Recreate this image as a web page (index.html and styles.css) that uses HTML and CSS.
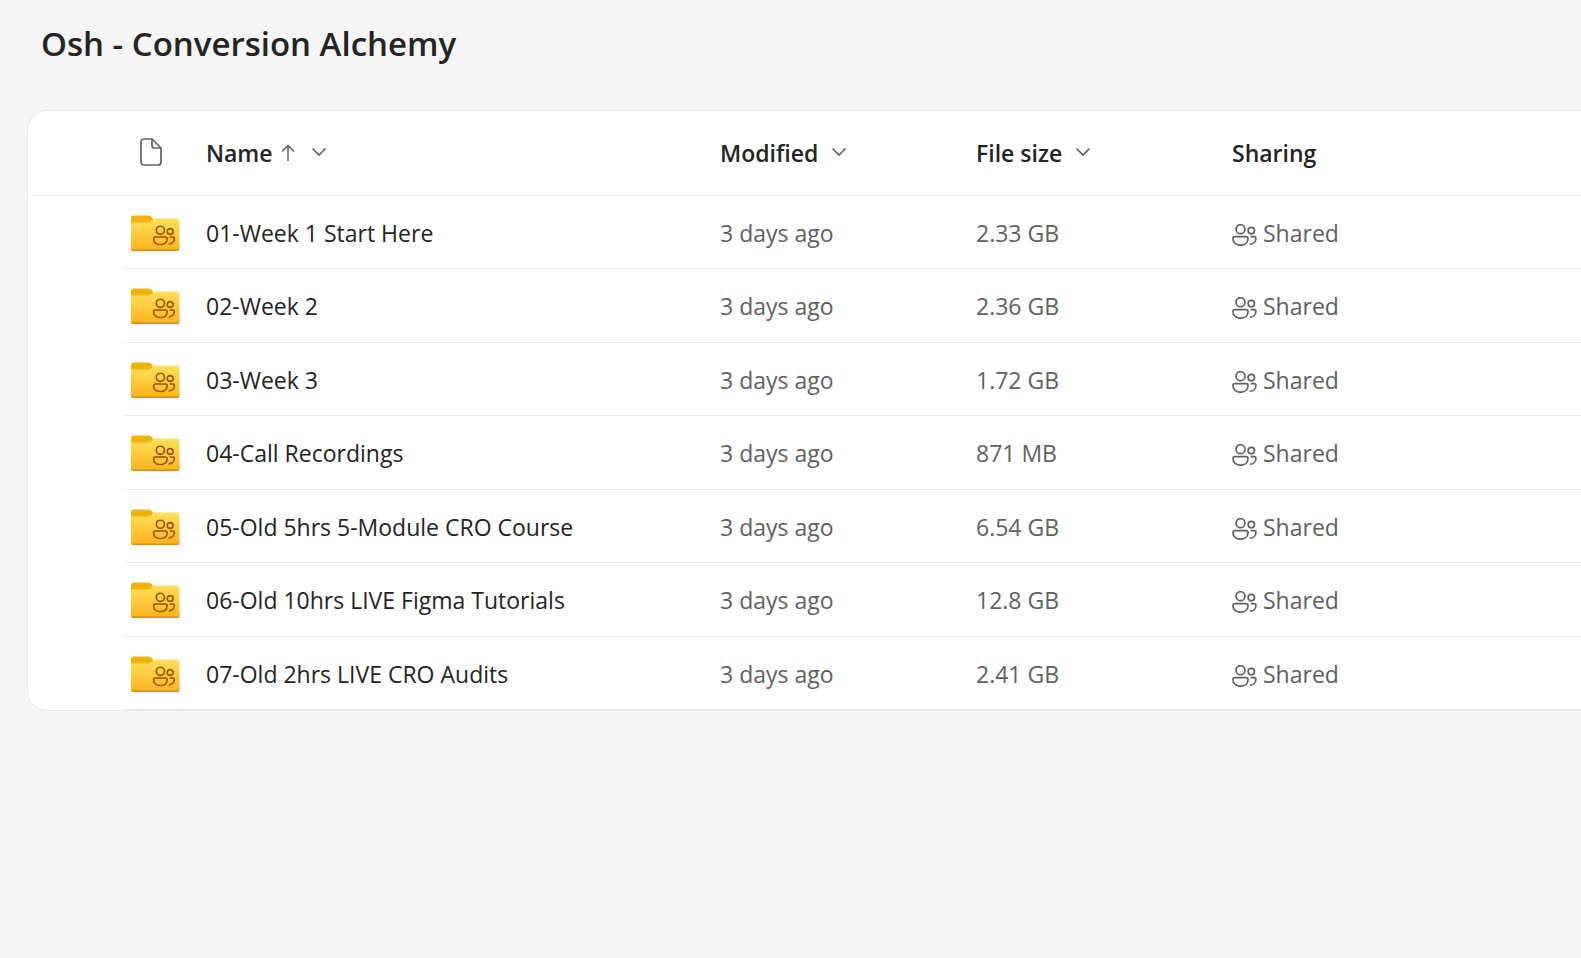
FILE: index.html
```html
<!DOCTYPE html>
<html lang="en">
<head>
    <meta charset="UTF-8">
    <meta name="viewport" content="width=device-width, initial-scale=1.0">
    <title>Osh - Conversion Alchemy</title>
    <link rel="stylesheet" href="styles.css">
</head>
<body>

    <!-- Shared icons -->
    <svg class="sprite" aria-hidden="true">
        <defs>
            <linearGradient id="folderFill" x1="0" y1="0" x2="0" y2="1">
                <stop offset="0" stop-color="#ffe05c"/>
                <stop offset="1" stop-color="#ffb41c"/>
            </linearGradient>
        </defs>
        <symbol id="people" viewBox="0 0 25 22">
            <circle cx="8.5" cy="5.2" r="4.5"/>
            <circle cx="19.3" cy="6.6" r="3.2"/>
            <path d="M3 12.7h11c1.2 0 2 .8 2 2 0 4-3.3 6.5-7.5 6.5S1 18.7 1 14.7c0-1.2.8-2 2-2z"/>
            <path d="M18.7 12.7h3.5c1 0 1.700.7 1.700 1.700 0 3.600-2.700 5.800-6.200 5.800"/>
        </symbol>
        <symbol id="folder" viewBox="0 0 50 36">
            <path d="M1 3a2.500 2.500 0 0 1 2.500-2.500h14.500c1.200 0 2 .3 2.800 1L23.500 4v5H1z" fill="#efb30c"/>
            <path d="M1 31v3a2 2 0 0 0 2 2h44.500a2 2 0 0 0 2-2v-3z" fill="#d98a16"/>
            <path d="M1 7.500h17c1.200 0 2-.3 2.900-1.100l2-1.800c.8-.8 1.700-1.100 2.900-1.100H47a2.500 2.500 0 0 1 2.500 2.500v26.500a2 2 0 0 1-2 2H3a2 2 0 0 1-2-2z" fill="url(#folderFill)"/>
            <use href="#people" x="22.500" y="10.500" width="23" height="20" fill="none" stroke="#9a5407" stroke-width="1.800"/>
        </symbol>
        <symbol id="chevron" viewBox="0 0 16 10">
            <path d="M1.500 1.500L8 8l6.500-6.500"/>
        </symbol>
    </svg>

    <h1 class="title">Osh - Conversion Alchemy</h1>

    <main class="card">
        <table class="files">
            <colgroup>
                <col class="col-select">
                <col class="col-type">
                <col class="col-name">
                <col class="col-meta">
                <col class="col-meta">
                <col>
            </colgroup>
            <thead>
                <tr>
                    <th></th>
                    <th>
                        <svg class="file-icon" viewBox="0 0 22 28" role="img" aria-label="File type">
                            <path d="M4 1h8l9 9v14a3 3 0 0 1-3 3H4a3 3 0 0 1-3-3V4a3 3 0 0 1 3-3z"/>
                            <path d="M12 1v6.500a2.500 2.500 0 0 0 2.500 2.500H21"/>
                        </svg>
                    </th>
                    <th aria-sort="ascending">
                        <button class="sort">Name
                            <svg class="arrow" viewBox="0 0 14 18"><path d="M7 17V1.500M1 7.500l6-6 6 6"/></svg>
                            <svg class="chevron"><use href="#chevron"/></svg>
                        </button>
                    </th>
                    <th><button class="sort">Modified <svg class="chevron"><use href="#chevron"/></svg></button></th>
                    <th><button class="sort">File size <svg class="chevron"><use href="#chevron"/></svg></button></th>
                    <th>Sharing</th>
                </tr>
            </thead>
            <tbody>
                <tr>
                    <td></td>
                    <td><svg class="folder"><use href="#folder"/></svg></td>
                    <td><a class="name" href="#">01-Week 1 Start Here</a></td>
                    <td>3 days ago</td>
                    <td>2.33 GB</td>
                    <td><span class="shared"><svg class="people"><use href="#people"/></svg>Shared</span></td>
                </tr>
                <tr>
                    <td></td>
                    <td><svg class="folder"><use href="#folder"/></svg></td>
                    <td><a class="name" href="#">02-Week 2</a></td>
                    <td>3 days ago</td>
                    <td>2.36 GB</td>
                    <td><span class="shared"><svg class="people"><use href="#people"/></svg>Shared</span></td>
                </tr>
                <tr>
                    <td></td>
                    <td><svg class="folder"><use href="#folder"/></svg></td>
                    <td><a class="name" href="#">03-Week 3</a></td>
                    <td>3 days ago</td>
                    <td>1.72 GB</td>
                    <td><span class="shared"><svg class="people"><use href="#people"/></svg>Shared</span></td>
                </tr>
                <tr>
                    <td></td>
                    <td><svg class="folder"><use href="#folder"/></svg></td>
                    <td><a class="name" href="#">04-Call Recordings</a></td>
                    <td>3 days ago</td>
                    <td>871 MB</td>
                    <td><span class="shared"><svg class="people"><use href="#people"/></svg>Shared</span></td>
                </tr>
                <tr>
                    <td></td>
                    <td><svg class="folder"><use href="#folder"/></svg></td>
                    <td><a class="name" href="#">05-Old 5hrs 5-Module CRO Course</a></td>
                    <td>3 days ago</td>
                    <td>6.54 GB</td>
                    <td><span class="shared"><svg class="people"><use href="#people"/></svg>Shared</span></td>
                </tr>
                <tr>
                    <td></td>
                    <td><svg class="folder"><use href="#folder"/></svg></td>
                    <td><a class="name" href="#">06-Old 10hrs LIVE Figma Tutorials</a></td>
                    <td>3 days ago</td>
                    <td>12.8 GB</td>
                    <td><span class="shared"><svg class="people"><use href="#people"/></svg>Shared</span></td>
                </tr>
                <tr>
                    <td></td>
                    <td><svg class="folder"><use href="#folder"/></svg></td>
                    <td><a class="name" href="#">07-Old 2hrs LIVE CRO Audits</a></td>
                    <td>3 days ago</td>
                    <td>2.41 GB</td>
                    <td><span class="shared"><svg class="people"><use href="#people"/></svg>Shared</span></td>
                </tr>
            </tbody>
        </table>
    </main>

</body>
</html>
```
FILE: styles.css
```css
body {
    margin: 0;
    padding: 20px 0 0 27px;
    background-color: #f5f5f5;
    color: #242424;
    font-family: 'Segoe UI', 'Open Sans', sans-serif;
    font-size: 23px;
    line-height: 32px;
}

/* kept rendered (not display: none) so the gradient still resolves */
.sprite {
    position: absolute;
    width: 0;
    height: 0;
}

.title {
    margin: 0 0 42px;
    padding-left: 14px;
    font-size: 33px;
    font-weight: 600;
    line-height: 48px;
}

.card {
    background-color: #fff;
    border: 1px solid #e8e8e8;
    border-right: none;
    border-radius: 20px 0 0 20px;
    overflow: hidden;
}

.files {
    width: 100%;
    table-layout: fixed;
    border-collapse: separate;
    border-spacing: 0;
}

.col-select {
    width: 96px;
}

.col-type {
    width: 82px;
}

.col-name {
    width: 514px;
}

.col-meta {
    width: 256px;
}

.files th,
.files td {
    box-sizing: border-box;
    padding: 0;
    text-align: left;
    vertical-align: middle;
    white-space: nowrap;
}

.files th {
    height: 85px;
    border-bottom: 1px solid #ebebeb;
    font-weight: 600;
}

.files td {
    height: 73px;
    padding-top: 1px;
    color: #616161;
}

/* rows alternate 73 / 74 so the rhythm averages out */
.files tbody tr:nth-child(even) td {
    height: 74px;
}

.files td + td {
    border-bottom: 1px solid #ebebeb;
}

.sort {
    display: flex;
    align-items: center;
    padding: 0;
    border: none;
    background: none;
    color: inherit;
    font: inherit;
    cursor: pointer;
}

.arrow,
.chevron,
.file-icon {
    display: block;
    fill: none;
    stroke: #616161;
}

.arrow {
    width: 14px;
    height: 18px;
    margin-left: 8px;
    stroke-width: 1.5;
}

.chevron {
    width: 16px;
    height: 10px;
    margin: 0 0 2px 13px;
    stroke-width: 1.7;
}

.arrow + .chevron {
    margin-left: 16px;
}

.file-icon {
    width: 22px;
    height: 28px;
    margin: 0 0 2px 16px;
    stroke-width: 1.7;
}

.folder {
    display: block;
    width: 50px;
    height: 36px;
    margin-left: 6px;
}

.name {
    color: #242424;
    text-decoration: none;
}

.name:hover {
    text-decoration: underline;
}

.shared {
    display: flex;
    align-items: center;
    gap: 6px;
}

.people {
    width: 25px;
    height: 22px;
    margin-top: 4px;
    fill: none;
    stroke: #616161;
    stroke-width: 1.7;
}
```
